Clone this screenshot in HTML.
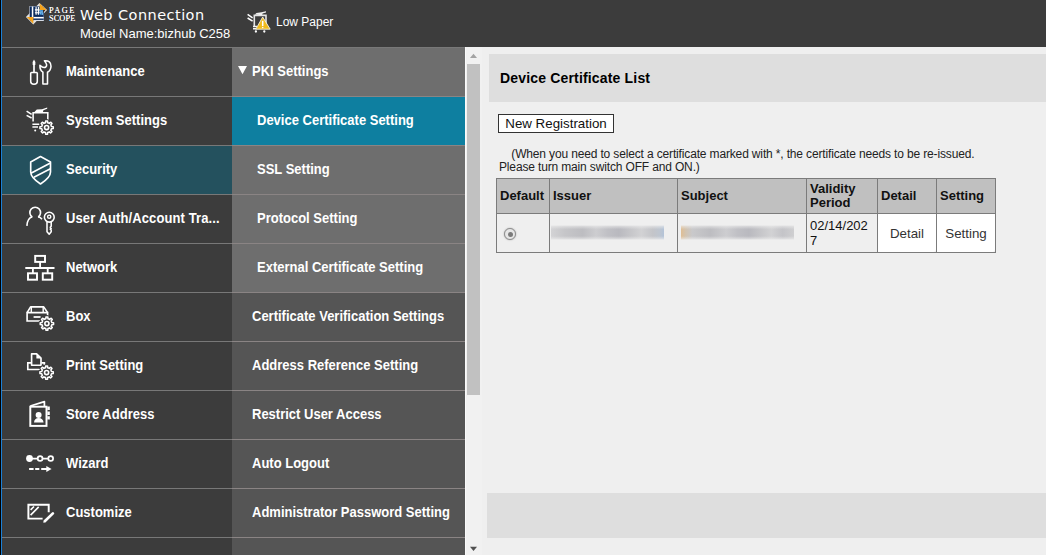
<!DOCTYPE html>
<html><head><meta charset="utf-8">
<style>
html,body{margin:0;padding:0;}
body{width:1046px;height:555px;overflow:hidden;background:#3c3c3c;font-family:"Liberation Sans",sans-serif;position:relative;}
#edge{position:absolute;left:0;top:0;width:1px;height:555px;background:#000;border-right:1px solid #1b80d6;z-index:9;}
#hdr{position:absolute;left:0;top:0;width:1046px;height:47px;background:#3c3c3c;}
#hline{position:absolute;left:0;top:47px;width:465px;height:1px;background:#787878;}
#title{position:absolute;left:80px;top:7px;font-family:"DejaVu Sans","Liberation Sans",sans-serif;font-size:14.5px;letter-spacing:.45px;color:#fff;white-space:nowrap;}
#model{position:absolute;left:80px;top:26px;font-size:13px;color:#fff;white-space:nowrap;}
#ps{position:absolute;left:49px;top:7px;font-family:"Liberation Serif",serif;font-size:8.3px;line-height:8px;color:#fff;letter-spacing:.1px;white-space:nowrap;}
#ps{text-shadow:0 0 .5px rgba(255,255,255,.8);}
#ps .pg{letter-spacing:1.45px;}
#lowp{position:absolute;left:276px;top:15px;font-size:12px;color:#fff;}
#left{position:absolute;left:0;top:48px;width:232px;}
#left .r{height:48px;border-bottom:1px solid #787878;position:relative;background:#3c3c3c;}
#left .r.sel{background:#24515e;}
#left .r span{position:absolute;left:66px;top:16px;transform:scaleY(1.09);transform-origin:0 12px;font-size:13px;font-weight:bold;color:#fff;white-space:nowrap;}
#left .r svg{position:absolute;left:20px;top:2px;}
#mid{position:absolute;left:232px;top:48px;width:233px;}
#mid .r{height:48px;border-bottom:1px solid #8a8484;position:relative;background:#555;}
#mid .r.g{background:#6e6e6e;}
#mid .r.sel{background:#0e7fa0;}
#mid .r span{position:absolute;left:20px;top:16px;transform:scaleY(1.09);transform-origin:0 12px;font-size:13px;font-weight:bold;color:#fff;white-space:nowrap;}
#mid .r.s span{left:25px;}
#sb{position:absolute;left:465px;top:47px;width:17px;height:508px;background:#f1f1f1;border-left:1px solid #fafafa;box-sizing:border-box;}
#thumb{position:absolute;left:1px;top:17px;width:13px;height:331px;background:#c1c1c1;}
#main{position:absolute;left:482px;top:47px;width:564px;height:508px;background:#efefef;}
#tbar{position:absolute;left:7px;top:7px;width:557px;height:48px;background:#dedede;}
#tbar span{position:absolute;left:11px;top:16px;font-size:14px;font-weight:bold;color:#000;letter-spacing:.17px;white-space:nowrap;}
#btn{position:absolute;left:16px;top:67px;width:114px;height:17px;border:1px solid #333;background:#fff;font-size:13.33px;line-height:17px;text-align:center;color:#111;}
#note{position:absolute;left:17px;top:101px;font-size:12px;line-height:13px;color:#222;white-space:nowrap;letter-spacing:-.15px;text-indent:12.3px;}
#tbl{position:absolute;left:14px;top:131px;border-collapse:collapse;table-layout:fixed;font-size:13px;color:#111;}
#tbl td,#tbl th{border:1px solid #7b7b7b;padding:0 0 0 3px;text-align:left;vertical-align:middle;line-height:15px;}
#tbl th{background:#c0c0c0;font-weight:bold;height:33px;padding-bottom:1px;line-height:14px;}
#tbl td{height:38px;}
#tbl td.w{padding:0;}
#tbl td.w div{background:#fff;border-radius:0 0 3px 0;height:38px;line-height:40px;margin:0;text-align:center;font-size:13.33px;color:#333;}
.blur{display:block;height:15px;width:113px;margin-left:-2px;margin-top:-1px;background:linear-gradient(to bottom,#efefef 0,rgba(239,239,239,.5) 10%,rgba(239,239,239,0) 28%,rgba(239,239,239,0) 74%,rgba(239,239,239,.5) 90%,#efefef 100%),linear-gradient(to right,#d3d3d5 0,#c6c6c9 12%,#bdbdc1 28%,#cdcdd0 40%,#c0c0c5 50%,#b9b9bf 60%,#c8c8cb 72%,#d2d2d4 80%,#c4c5c9 90%,#bfc6d0 96%,#b3c3d8 100%);}
.blur.b2{margin-left:0;background:linear-gradient(to bottom,#efefef 0,rgba(239,239,239,.5) 10%,rgba(239,239,239,0) 28%,rgba(239,239,239,0) 74%,rgba(239,239,239,.5) 90%,#efefef 100%),linear-gradient(to right,#e0be94 0,#d3c4b0 4%,#c9c9cb 10%,#bdbdc1 26%,#cdcdd0 40%,#c0c0c5 50%,#b9b9bf 60%,#c8c8cb 72%,#d2d2d4 80%,#c4c4c8 90%,#cfcfd1 100%);}
#radio{display:block;width:10px;height:10px;border-radius:50%;border:1px solid #8e8e8e;background:#e6e6e6;margin-left:4px;margin-top:2px;position:relative;box-shadow:0 0 1.5px #999;}
#radio:after{content:"";position:absolute;left:2.5px;top:2.5px;width:5px;height:5px;border-radius:50%;background:#7a7a7a;}
#bbar{position:absolute;left:5px;top:446px;width:559px;height:45px;background:#dedede;}
</style></head><body>
<div id="hdr">
<svg id="logo" width="30" height="28" viewBox="22 0 30 28" style="position:absolute;left:22px;top:0">
<polygon points="39.5,2.9 47.1,9.9 33.3,24.6 25.9,16.9" fill="#e2e2e2"/>
<rect x="29.3" y="6.1" width="14.6" height="14.9" fill="#c9cdd6"/>
<rect x="29.8" y="6.5" width="13.9" height="14.3" fill="#0b2b5e"/>
<rect x="31.8" y="6.5" width="1.5" height="10.6" fill="#fff"/>
<rect x="33.3" y="16.9" width="10.4" height="1.6" fill="#fff"/>
<rect x="33.3" y="19.9" width="10.4" height="0.9" fill="#fff"/>
<rect x="39.6" y="7.2" width="3.6" height="7.6" fill="#3f8fd0"/>
<path d="M36.1 7.1 V14.7 M38.4 7.1 V14.7 M34.9 9.9 H39.7 M34.9 12.7 H39.7" stroke="#fff" stroke-width="1.15" fill="none"/>
<path d="M40.4 8 h1 v1 h-1z M41.4 11.4 h1.2 v1 h-1.2z M40 12.6 h1 v1 h-1z M42 13.5 h1 v1 h-1z M39.4 10.6 h1 v1 h-1z" fill="#a8d4f4"/>
<polygon points="39.7,3.6 46.6,9.9 39.7,9.9" fill="#f5a21b"/>
<polygon points="43.1,10 45.5,10 43.1,12.7" fill="#3d2410"/>
<polygon points="26.8,17.1 33.3,17.1 33.3,23.8" fill="#f5a21b"/>
</svg>
<div id="ps"><span class="pg">PAGE</span><br>SCOPE</div>
<svg id="lpi" width="40" height="36" viewBox="0 0 40 36" style="position:absolute;left:240px;top:4px">
<path d="M7.6 10.4 L12.6 13.8 M7.6 14 L12.6 17.2" stroke="#fff" stroke-width="1.5" fill="none"/>
<path d="M14.3 22.6 V11.4 H26 V21" stroke="#e4e4e4" stroke-width="1.6" fill="none"/>
<path d="M14.8 10.6 L16.5 9 L21.4 8.3 L26 7.2 L26 8.6 L22.6 9.6 L22 11.2 Z" fill="#f0f0f0"/>
<path d="M13 22.4 H17 M13 24.7 H16.4" stroke="#f4f4f4" stroke-width="1.5" fill="none"/>
<circle cx="15.9" cy="27.5" r="1.15" fill="#fff"/><circle cx="24.3" cy="27.5" r="1.15" fill="#fff"/>
<path d="M22.7 13 L30.2 25.2 H15.8 Z" fill="#f2bc1c" stroke="#f4f0e0" stroke-width=".9" stroke-linejoin="round"/>
<path d="M22.7 16.8 V22" stroke="#fff" stroke-width="1.5"/><circle cx="22.7" cy="23.5" r=".8" fill="#fff"/>
</svg>
<div id="title">Web Connection</div>
<div id="model">Model Name:bizhub C258</div>
<div id="lowp">Low Paper</div>
</div>
<div id="hline"></div>
<div id="left">
<div class="r"><svg width="42" height="42" viewBox="0 0 42 42">
<path d="M14 9.5 L15.4 12 L15.3 15 L12.7 15 L12.6 12 Z" fill="#fff"/>
<path d="M14 14.5 V22.3" fill="none" stroke="#fff" stroke-width="1.7"/>
<path d="M11.6 22.4 H16.4 Q17.3 22.4 17.3 23.3 V31.6 Q17.3 34.3 14 34.3 Q10.7 34.3 10.7 31.6 V23.3 Q10.7 22.4 11.6 22.4 Z" fill="none" stroke="#fff" stroke-width="1.55"/>
<path d="M22.9 34 V22.2 Q19.7 20 19.9 15.2 Q23.4 18.6 25.8 17 Q28 15 24.4 10.8 Q31 10.2 31 16.2 Q30.9 20.3 27.5 22.2 V34 Z" fill="none" stroke="#fff" stroke-width="1.55" stroke-linejoin="round"/>
</svg><span>Maintenance</span></div>
<div class="r"><svg width="42" height="42" viewBox="0 0 42 42">
<path d="M6.6 12.2 L11.6 15.4 M6.6 16.4 L11.6 19" fill="none" stroke="#fff" stroke-width="1.55"/>
<path d="M13.1 22.6 V13.7 H27.8 V21" fill="none" stroke="#fff" stroke-width="1.55"/>
<path d="M14.2 13.2 L16.8 10.6 L22 10.2 L27.2 8.5 L27.2 9.8 L23.4 11.2 L22.8 13.4 Z" fill="#fff"/>
<path d="M12.4 25.3 H19.4 M12.4 27.9 H18" fill="none" stroke="#fff" stroke-width="1.55"/>
<circle cx="15.2" cy="31.4" r="1" fill="#fff"/>
<path d="M25.55 23.71L25.66 21.97A6.70 6.70 0 0 1 27.54 21.97L27.65 23.71A5.00 5.00 0 0 1 29.31 24.40L30.62 23.24A6.70 6.70 0 0 1 31.96 24.58L30.80 25.89A5.00 5.00 0 0 1 31.49 27.55L33.23 27.66A6.70 6.70 0 0 1 33.23 29.54L31.49 29.65A5.00 5.00 0 0 1 30.80 31.31L31.96 32.62A6.70 6.70 0 0 1 30.62 33.96L29.31 32.80A5.00 5.00 0 0 1 27.65 33.49L27.54 35.23A6.70 6.70 0 0 1 25.66 35.23L25.55 33.49A5.00 5.00 0 0 1 23.89 32.80L22.58 33.96A6.70 6.70 0 0 1 21.24 32.62L22.40 31.31A5.00 5.00 0 0 1 21.71 29.65L19.97 29.54A6.70 6.70 0 0 1 19.97 27.66L21.71 27.55A5.00 5.00 0 0 1 22.40 25.89L21.24 24.58A6.70 6.70 0 0 1 22.58 23.24L23.89 24.40A5.00 5.00 0 0 1 25.55 23.71Z" fill="#3c3c3c" stroke="#3c3c3c" stroke-width="3.6" stroke-linejoin="round"/><path d="M25.55 23.71L25.66 21.97A6.70 6.70 0 0 1 27.54 21.97L27.65 23.71A5.00 5.00 0 0 1 29.31 24.40L30.62 23.24A6.70 6.70 0 0 1 31.96 24.58L30.80 25.89A5.00 5.00 0 0 1 31.49 27.55L33.23 27.66A6.70 6.70 0 0 1 33.23 29.54L31.49 29.65A5.00 5.00 0 0 1 30.80 31.31L31.96 32.62A6.70 6.70 0 0 1 30.62 33.96L29.31 32.80A5.00 5.00 0 0 1 27.65 33.49L27.54 35.23A6.70 6.70 0 0 1 25.66 35.23L25.55 33.49A5.00 5.00 0 0 1 23.89 32.80L22.58 33.96A6.70 6.70 0 0 1 21.24 32.62L22.40 31.31A5.00 5.00 0 0 1 21.71 29.65L19.97 29.54A6.70 6.70 0 0 1 19.97 27.66L21.71 27.55A5.00 5.00 0 0 1 22.40 25.89L21.24 24.58A6.70 6.70 0 0 1 22.58 23.24L23.89 24.40A5.00 5.00 0 0 1 25.55 23.71Z" fill="#3c3c3c" stroke="#fff" stroke-width="1.55" stroke-linejoin="round"/><circle cx="26.60" cy="28.60" r="2.05" fill="none" stroke="#fff" stroke-width="1.6"/></svg><span>System Settings</span></div>
<div class="r sel"><svg width="42" height="42" viewBox="0 0 42 42">
<path d="M20.5 8.6 L30.5 13.9 V24 Q30.5 29.5 20.5 36 Q10.7 29.5 10.7 24 V13.9 Z" fill="none" stroke="#fff" stroke-width="1.65" stroke-linejoin="round"/>
<path d="M10.9 25.2 L30.4 14.9 M13.9 29.3 L30.4 20.8" fill="none" stroke="#fff" stroke-width="1.65"/>
</svg><span>Security</span></div>
<div class="r"><svg width="42" height="42" viewBox="0 0 42 42">
<path d="M12.2 20 A5.35 5.35 0 1 1 18.2 20" fill="none" stroke="#fff" stroke-width="1.65"/>
<path d="M12.3 19.8 Q7.2 21.5 6.9 28.9" fill="none" stroke="#fff" stroke-width="1.65"/>
<path d="M18.1 19.8 Q20.5 20.5 22 22.2" fill="none" stroke="#fff" stroke-width="1.65"/>
<circle cx="29.3" cy="20.2" r="4.9" fill="none" stroke="#fff" stroke-width="1.55"/>
<circle cx="29.2" cy="19.7" r="1.6" fill="none" stroke="#fff" stroke-width="1.45"/>
<path d="M27 24.6 V34.8 L29.2 37.2 L31.2 34.8 V33 L30.2 32.2 L31.2 31.3 L30.2 30.3 L31.2 29.3 V24.6" fill="none" stroke="#fff" stroke-width="1.55" stroke-linejoin="round"/>
</svg><span style="letter-spacing:.1px">User Auth/Account Tra...</span></div>
<div class="r"><svg width="42" height="42" viewBox="0 0 42 42">
<rect x="15.2" y="9.9" width="9.8" height="6" fill="none" stroke="#fff" stroke-width="1.95"/>
<path d="M20.1 16 V22 M5.3 22 H34.5 M12.9 22 V27 M27.7 22 V27" fill="none" stroke="#fff" stroke-width="1.85"/>
<rect x="8" y="27.3" width="9" height="6.4" fill="none" stroke="#fff" stroke-width="1.95"/>
<rect x="22.8" y="27.3" width="9.4" height="6.4" fill="none" stroke="#fff" stroke-width="1.95"/>
</svg><span>Network</span></div>
<div class="r"><svg width="42" height="42" viewBox="0 0 42 42">
<path d="M7.1 17.6 H27.6 V26 H7.1 Z" fill="none" stroke="#fff" stroke-width="1.65"/>
<path d="M7.1 17.6 L10.6 11.9 H23.7 L27.6 17.6" fill="none" stroke="#fff" stroke-width="1.65" stroke-linejoin="round"/>
<path d="M11.3 12 V17 M23.2 12 V17" fill="none" stroke="#fff" stroke-width="1.45"/>
<path d="M13.6 22 H20.6" fill="none" stroke="#fff" stroke-width="1.75"/>
<path d="M25.85 23.71L25.96 21.97A6.70 6.70 0 0 1 27.84 21.97L27.95 23.71A5.00 5.00 0 0 1 29.61 24.40L30.92 23.24A6.70 6.70 0 0 1 32.26 24.58L31.10 25.89A5.00 5.00 0 0 1 31.79 27.55L33.53 27.66A6.70 6.70 0 0 1 33.53 29.54L31.79 29.65A5.00 5.00 0 0 1 31.10 31.31L32.26 32.62A6.70 6.70 0 0 1 30.92 33.96L29.61 32.80A5.00 5.00 0 0 1 27.95 33.49L27.84 35.23A6.70 6.70 0 0 1 25.96 35.23L25.85 33.49A5.00 5.00 0 0 1 24.19 32.80L22.88 33.96A6.70 6.70 0 0 1 21.54 32.62L22.70 31.31A5.00 5.00 0 0 1 22.01 29.65L20.27 29.54A6.70 6.70 0 0 1 20.27 27.66L22.01 27.55A5.00 5.00 0 0 1 22.70 25.89L21.54 24.58A6.70 6.70 0 0 1 22.88 23.24L24.19 24.40A5.00 5.00 0 0 1 25.85 23.71Z" fill="#3c3c3c" stroke="#3c3c3c" stroke-width="3.6" stroke-linejoin="round"/><path d="M25.85 23.71L25.96 21.97A6.70 6.70 0 0 1 27.84 21.97L27.95 23.71A5.00 5.00 0 0 1 29.61 24.40L30.92 23.24A6.70 6.70 0 0 1 32.26 24.58L31.10 25.89A5.00 5.00 0 0 1 31.79 27.55L33.53 27.66A6.70 6.70 0 0 1 33.53 29.54L31.79 29.65A5.00 5.00 0 0 1 31.10 31.31L32.26 32.62A6.70 6.70 0 0 1 30.92 33.96L29.61 32.80A5.00 5.00 0 0 1 27.95 33.49L27.84 35.23A6.70 6.70 0 0 1 25.96 35.23L25.85 33.49A5.00 5.00 0 0 1 24.19 32.80L22.88 33.96A6.70 6.70 0 0 1 21.54 32.62L22.70 31.31A5.00 5.00 0 0 1 22.01 29.65L20.27 29.54A6.70 6.70 0 0 1 20.27 27.66L22.01 27.55A5.00 5.00 0 0 1 22.70 25.89L21.54 24.58A6.70 6.70 0 0 1 22.88 23.24L24.19 24.40A5.00 5.00 0 0 1 25.85 23.71Z" fill="#3c3c3c" stroke="#fff" stroke-width="1.55" stroke-linejoin="round"/><circle cx="26.90" cy="28.60" r="2.05" fill="none" stroke="#fff" stroke-width="1.6"/></svg><span>Box</span></div>
<div class="r"><svg width="42" height="42" viewBox="0 0 42 42">
<path d="M11.6 9.8 H16.6 L21 14.2 V21.2 H11.6 Z" fill="none" stroke="#fff" stroke-width="1.65" stroke-linejoin="round"/>
<path d="M16.4 9.8 L21 14.4 H16.4 Z" fill="#fff"/>
<path d="M11.4 18.8 H7.8 V25.5 H21 M21.4 18.8 H24.4 V21" fill="none" stroke="#fff" stroke-width="1.65"/>
<path d="M25.55 23.71L25.66 21.97A6.70 6.70 0 0 1 27.54 21.97L27.65 23.71A5.00 5.00 0 0 1 29.31 24.40L30.62 23.24A6.70 6.70 0 0 1 31.96 24.58L30.80 25.89A5.00 5.00 0 0 1 31.49 27.55L33.23 27.66A6.70 6.70 0 0 1 33.23 29.54L31.49 29.65A5.00 5.00 0 0 1 30.80 31.31L31.96 32.62A6.70 6.70 0 0 1 30.62 33.96L29.31 32.80A5.00 5.00 0 0 1 27.65 33.49L27.54 35.23A6.70 6.70 0 0 1 25.66 35.23L25.55 33.49A5.00 5.00 0 0 1 23.89 32.80L22.58 33.96A6.70 6.70 0 0 1 21.24 32.62L22.40 31.31A5.00 5.00 0 0 1 21.71 29.65L19.97 29.54A6.70 6.70 0 0 1 19.97 27.66L21.71 27.55A5.00 5.00 0 0 1 22.40 25.89L21.24 24.58A6.70 6.70 0 0 1 22.58 23.24L23.89 24.40A5.00 5.00 0 0 1 25.55 23.71Z" fill="#3c3c3c" stroke="#3c3c3c" stroke-width="3.6" stroke-linejoin="round"/><path d="M25.55 23.71L25.66 21.97A6.70 6.70 0 0 1 27.54 21.97L27.65 23.71A5.00 5.00 0 0 1 29.31 24.40L30.62 23.24A6.70 6.70 0 0 1 31.96 24.58L30.80 25.89A5.00 5.00 0 0 1 31.49 27.55L33.23 27.66A6.70 6.70 0 0 1 33.23 29.54L31.49 29.65A5.00 5.00 0 0 1 30.80 31.31L31.96 32.62A6.70 6.70 0 0 1 30.62 33.96L29.31 32.80A5.00 5.00 0 0 1 27.65 33.49L27.54 35.23A6.70 6.70 0 0 1 25.66 35.23L25.55 33.49A5.00 5.00 0 0 1 23.89 32.80L22.58 33.96A6.70 6.70 0 0 1 21.24 32.62L22.40 31.31A5.00 5.00 0 0 1 21.71 29.65L19.97 29.54A6.70 6.70 0 0 1 19.97 27.66L21.71 27.55A5.00 5.00 0 0 1 22.40 25.89L21.24 24.58A6.70 6.70 0 0 1 22.58 23.24L23.89 24.40A5.00 5.00 0 0 1 25.55 23.71Z" fill="#3c3c3c" stroke="#fff" stroke-width="1.55" stroke-linejoin="round"/><circle cx="26.60" cy="28.60" r="2.05" fill="none" stroke="#fff" stroke-width="1.6"/></svg><span>Print Setting</span></div>
<div class="r"><svg width="42" height="42" viewBox="0 0 42 42">
<rect x="10.3" y="13.7" width="16.2" height="19.2" fill="none" stroke="#fff" stroke-width="1.95"/>
<path d="M10.3 13 L24.4 8.6 V13.4" fill="none" stroke="#fff" stroke-width="1.75" stroke-linejoin="round"/>
<path d="M27.3 13.4 H29.8 V17 H27.3 Z M27.3 18.4 H29.8 V22 H27.3 Z M27.3 23.2 H29.8 V26.6 H27.3 Z" fill="#fff"/>
<circle cx="18.6" cy="22" r="3" fill="#fff"/>
<path d="M14 29.6 Q14.4 25 18.6 25 Q23 25 23.6 29.6 Z" fill="#fff"/>
</svg><span>Store Address</span></div>
<div class="r"><svg width="42" height="42" viewBox="0 0 42 42">
<circle cx="9.5" cy="16.5" r="3.4" fill="#fff"/>
<path d="M12 16.5 H18 M22.5 16.5 H28.3" fill="none" stroke="#fff" stroke-width="1.75"/>
<circle cx="20.1" cy="16.5" r="2.4" fill="none" stroke="#fff" stroke-width="1.75"/>
<circle cx="30.7" cy="16.5" r="2.4" fill="none" stroke="#fff" stroke-width="1.75"/>
<path d="M9.1 26.9 H13.6 M15.2 26.9 H19.3 M21.2 26.9 H27.5" fill="none" stroke="#fff" stroke-width="2.05"/>
<path d="M26.3 24 L31.6 26.9 L26.3 29.9 Z" fill="#fff"/>
</svg><span>Wizard</span></div>
<div class="r"><svg width="42" height="42" viewBox="0 0 42 42">
<path d="M28.7 21.3 V13.7 H8.4 V27.6 H22.6" fill="none" stroke="#fff" stroke-width="1.95"/>
<path d="M10.6 18.9 L14 15.5 M10.6 24.2 L18.7 15.9" fill="none" stroke="#fff" stroke-width="1.65"/>
<path d="M32.9 22.4 L25 30" stroke="#fff" stroke-width="2.7" stroke-linecap="round" fill="none"/>
<path d="M23.2 31.7 L24 28.9 L26.2 31 Z" fill="#fff"/>
</svg><span>Customize</span></div>
<div class="r"></div>
</div>
<div id="mid">
<div class="r g"><svg width="12" height="10" style="position:absolute;left:5px;top:17px"><polygon points="1,1 10,1 5.5,9.2" fill="#fff"/></svg><span>PKI Settings</span></div>
<div class="r sel s"><span>Device Certificate Setting</span></div>
<div class="r g s"><span>SSL Setting</span></div>
<div class="r g s"><span>Protocol Setting</span></div>
<div class="r g s"><span>External Certificate Setting</span></div>
<div class="r"><span>Certificate Verification Settings</span></div>
<div class="r"><span>Address Reference Setting</span></div>
<div class="r"><span>Restrict User Access</span></div>
<div class="r"><span>Auto Logout</span></div>
<div class="r"><span>Administrator Password Setting</span></div>
<div class="r"></div>
</div>
<div id="sb"><div id="thumb"></div>
<svg width="17" height="12" style="position:absolute;left:0;top:5px"><polygon points="4,6 11,6 7.5,1.8" fill="#a3a3a3"/></svg>
<svg width="17" height="8" style="position:absolute;left:0;top:498px"><polygon points="4,1.7 11,1.7 7.5,6" fill="#505050"/></svg>
</div>
<div id="main">
<div id="tbar"><span>Device Certificate List</span></div>
<div id="btn">New Registration</div>
<div id="note">(When you need to select a certificate marked with *, the certificate needs to be re-issued.<br>Please turn main switch OFF and ON.)</div>
<table id="tbl"><colgroup><col style="width:53px"><col style="width:128px"><col style="width:129px"><col style="width:71px"><col style="width:59px"><col style="width:59px"></colgroup>
<tr><th>Default</th><th>Issuer</th><th>Subject</th><th>Validity Period</th><th>Detail</th><th>Setting</th></tr>
<tr><td><span id="radio"></span></td><td><span class="blur"></span></td><td><span class="blur b2"></span></td><td>02/14/202<br>7</td><td class="w"><div>Detail</div></td><td class="w"><div>Setting</div></td></tr>
</table>
<div id="bbar"></div>
</div>
<div id="edge"></div>
</body></html>
